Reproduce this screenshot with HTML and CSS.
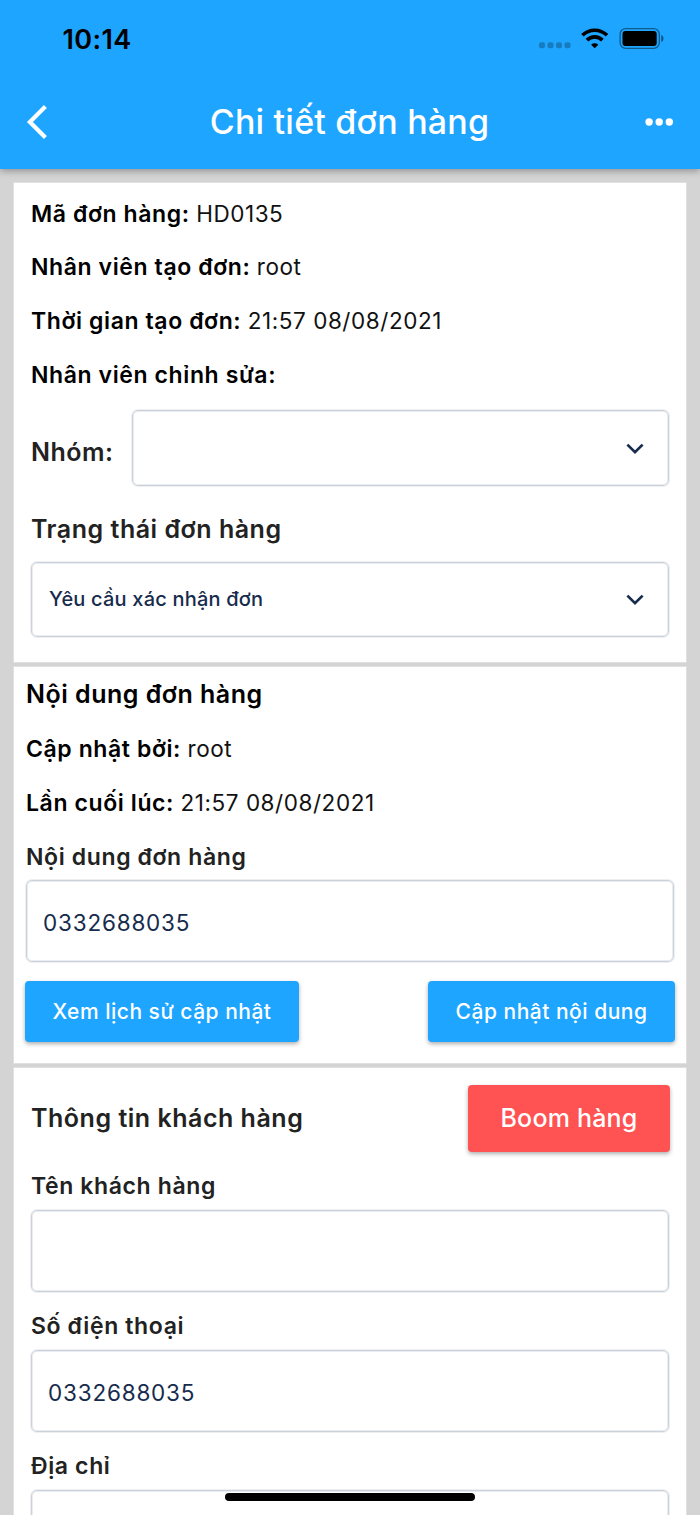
FILE: index.html
```html
<!DOCTYPE html>
<html lang="vi">
<head>
<meta charset="utf-8">
<title>Chi tiết đơn hàng</title>
<link rel="stylesheet" href="styles.css">
</head>
<body>
<div class="screen">
  <header class="header">
    <div class="status-bar">
      <span class="clock">10:14</span>
      <svg class="status-icons" width="126" height="24" viewBox="0 0 126 24">
        <g fill="#000" fill-opacity=".25">
          <rect x="0" y="15.2" width="6" height="6" rx="2"/>
          <rect x="8.5" y="15.2" width="6" height="6" rx="2"/>
          <rect x="17" y="15.2" width="6" height="6" rx="2"/>
          <rect x="25.5" y="15.2" width="6" height="6" rx="2"/>
        </g>
        <g fill="none" stroke="#000" stroke-width="3.7">
          <path d="M43.4 8.3A17.5 17.5 0 0 1 68 8.3"/>
          <path d="M48 13.1A10.8 10.8 0 0 1 63.4 13.1"/>
        </g>
        <path d="M55.7 21.3l-3.6-3.6a5.2 5.2 0 0 1 7.2 0z"/>
        <rect x="81.1" y="1.6" width="39.2" height="19.8" rx="5.6" fill="none" stroke="#000" stroke-opacity=".45" stroke-width="1.3"/>
        <rect x="83.5" y="4" width="34.2" height="14.9" rx="3"/>
        <path d="M122.3 7.7q2.2 1.1 2.2 3.7t-2.2 3.7z" fill-opacity=".5"/>
      </svg>
    </div>
    <div class="title-bar">
      <svg width="22" height="36" viewBox="0 0 22 36"><path d="M20.4 2.4L4.9 17.9 20.4 33.4" fill="none" stroke="#fff" stroke-width="4.2"/></svg>
      <h1 class="title">Chi tiết đơn hàng</h1>
      <svg width="28" height="8" viewBox="0 0 28 8" fill="#fff"><circle cx="4.1" cy="4" r="3.7"/><circle cx="14.2" cy="4" r="3.7"/><circle cx="24.3" cy="4" r="3.7"/></svg>
    </div>
  </header>
  <main class="content">
    <section class="card card-order">
      <p class="line"><b class="key">Mã đơn hàng:</b> <span class="value">HD0135</span></p>
      <p class="line"><b class="key">Nhân viên tạo đơn:</b> <span class="value">root</span></p>
      <p class="line"><b class="key">Thời gian tạo đơn:</b> <span class="value">21:57 08/08/2021</span></p>
      <p class="line"><b class="key">Nhân viên chỉnh sửa:</b></p>
      <div class="group-row">
        <span class="label heading">Nhóm:</span>
        <div class="select"><svg width="18" height="12" viewBox="0 0 18 12"><path d="M1.4 1.6L9 9.2l7.6-7.6" fill="none" stroke="#172b4d" stroke-width="2.7"/></svg></div>
      </div>
      <div class="label heading status-label">Trạng thái đơn hàng</div>
      <div class="select select-status"><span class="select-text">Yêu cầu xác nhận đơn</span><svg width="18" height="12" viewBox="0 0 18 12"><path d="M1.4 1.6L9 9.2l7.6-7.6" fill="none" stroke="#172b4d" stroke-width="2.7"/></svg></div>
    </section>
    <section class="card card-content">
      <h2 class="line section-title">Nội dung đơn hàng</h2>
      <p class="line"><b class="key">Cập nhật bởi:</b> <span class="value">root</span></p>
      <p class="line"><b class="key">Lần cuối lúc:</b> <span class="value">21:57 08/08/2021</span></p>
      <div class="label">Nội dung đơn hàng</div>
      <div class="input">0332688035</div>
      <div class="actions">
        <div class="button">Xem lịch sử cập nhật</div>
        <div class="button button-update">Cập nhật nội dung</div>
      </div>
    </section>
    <section class="card card-customer">
      <div class="customer-head">
        <span class="label heading">Thông tin khách hàng</span>
        <div class="button button-danger">Boom hàng</div>
      </div>
      <div class="label">Tên khách hàng</div>
      <div class="input"></div>
      <div class="label">Số điện thoại</div>
      <div class="input">0332688035</div>
      <div class="label">Địa chỉ</div>
      <div class="input"></div>
    </section>
  </main>
  <div class="home-indicator"></div>
</div>
</body>
</html>
```
FILE: styles.css
```css
* { box-sizing: border-box; }
body { margin: 0; font-family: Inter, "Liberation Sans", sans-serif; color: #000; }
svg { display: block; flex: none; }
h1, h2, p { margin: 0; }

.screen { position: relative; width: 700px; height: 1515px; overflow: hidden; background: #d4d4d4; }

.header { position: relative; height: 169px; background: #1ea5ff; box-shadow: 0 2px 7px rgba(0, 0, 0, .32); }
.status-bar { display: flex; justify-content: space-between; align-items: center; height: 77px; padding: 1px 35px 0 62.5px; }
.clock { font-size: 27px; font-weight: 600; letter-spacing: .4px; }
.title-bar { display: flex; justify-content: space-between; align-items: center; height: 90px; padding: 0 27px 0 25px; }
.title { padding-left: 7px; font-size: 34px; font-weight: 500; line-height: 44px; letter-spacing: .2px; color: #fff; }

.content { padding: 14px 14px 0; }
.card { background: #fff; box-shadow: 0 0 0 1px #e0e0e0; margin-bottom: 5px; }
.card-order { height: 479px; padding: 4px 17px 0; }
.card-content { height: 396px; padding: 0 12px; }
.card-customer { height: 460px; padding: 17px 17px 0; }

.line { height: 54px; line-height: 54px; font-size: 23px; font-weight: 400; white-space: nowrap; }
.card-order .line { line-height: 52px; }
.card-order .line:first-child { line-height: 54px; }
.key { font-weight: 600; letter-spacing: .6px; }
.value { font-weight: 400; font-size: 22.5px; letter-spacing: .55px; color: #111; }
.label { font-size: 23px; line-height: 54px; font-weight: 600; letter-spacing: .62px; color: #222; white-space: nowrap; }
.heading { font-size: 25px; letter-spacing: .52px; }
.card-content .section-title { height: 55px; font-size: 25px; font-weight: 600; letter-spacing: .5px; }

.group-row { display: grid; grid-template-columns: 101px 1fr; height: 83px; padding-top: 7px; }
.group-row .heading { line-height: 84px; }
.status-label { height: 76px; line-height: 86px; }
.select, .input { border: 1px solid #cbd2da; border-radius: 6px; box-shadow: 0 0 0 1px rgba(203, 210, 218, .35), inset 0 0 0 1px rgba(203, 210, 218, .4); }
.select { display: flex; align-items: center; height: 76px; padding: 2px 24px 0 17px; }
.select-status { height: 75px; padding-top: 0; }
.select svg { margin-left: auto; }
.select-text { padding-bottom: 2px; font-size: 20px; font-weight: 500; letter-spacing: .2px; color: #172b4d; }

.input { height: 82px; padding: 3px 16px 0; font-size: 22.5px; font-weight: 400; line-height: 77px; letter-spacing: .8px; color: #172b4d; }
.card-content .label { height: 50px; }
.actions { display: flex; justify-content: space-between; margin: 0 -1px; padding-top: 19px; }
.actions .button { width: 274px; }
.actions .button-update { width: 247px; }
.button { height: 61px; border-radius: 4px; background: #1ea5ff; box-shadow: 0 2px 4px rgba(0, 0, 0, .32); color: #fff; font-size: 21px; font-weight: 500; letter-spacing: .5px; line-height: 61px; text-align: center; white-space: nowrap; }

.customer-head { display: flex; justify-content: space-between; height: 67px; margin-right: -1px; }
.customer-head .heading { line-height: 67px; }
.button-danger { width: 202px; height: 67px; line-height: 67px; font-size: 25px; letter-spacing: .2px; background: #ff5252; }
.card-customer > .label { height: 58px; line-height: 69px; }

.home-indicator { position: absolute; left: 225px; top: 1493px; width: 250px; height: 8px; border-radius: 4px; background: #000; }
```
